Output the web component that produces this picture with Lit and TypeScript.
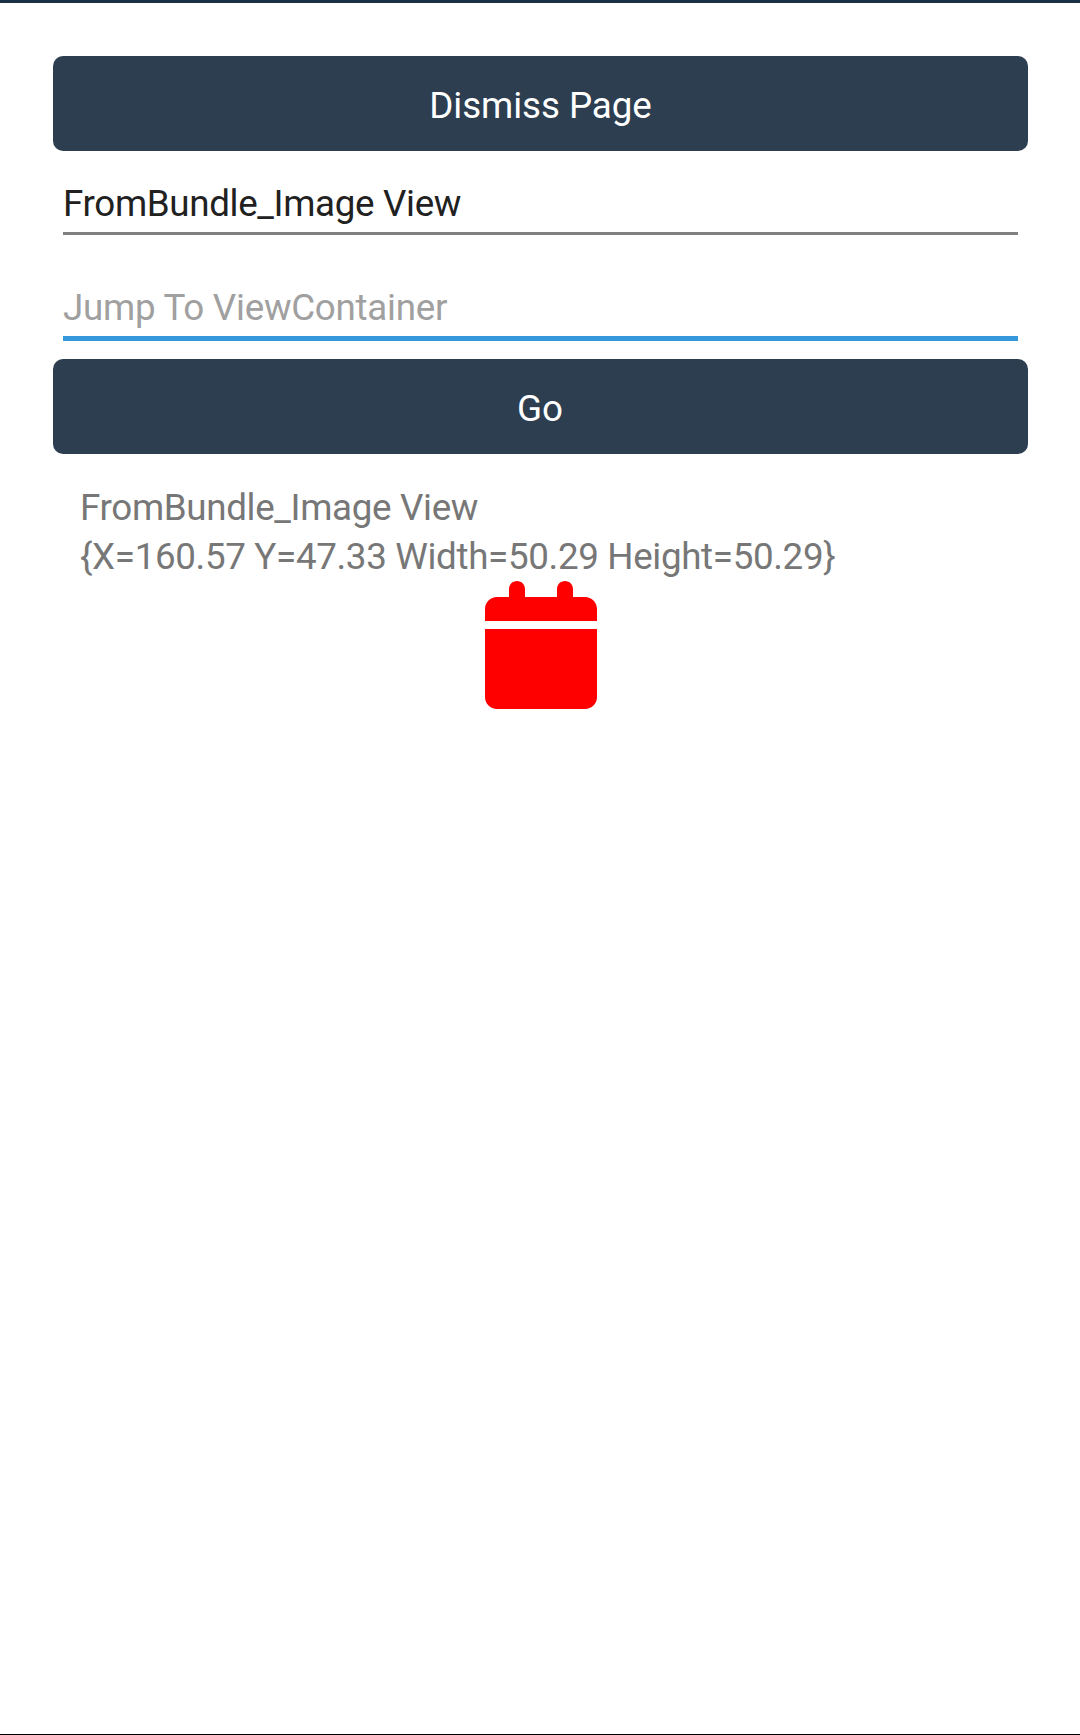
import { LitElement, html, css } from "lit";
import { customElement } from "lit/decorators.js";

@customElement("app-root")
export class AppRoot extends LitElement {
  static styles = css`
    :host {
      display: flex;
      flex-direction: column;
      box-sizing: border-box;
      width: 1080px;
      height: 1735px;
      border-top: 3px solid #1b3147;
      border-bottom: 1px solid #000;
      background: #fff;
      padding: 53px 52px 0 53px;
      font-family: Roboto, sans-serif;
      font-size: 36.75px;
      line-height: 43px;
      letter-spacing: -0.34px;
      color: #777;
    }
    .button {
      display: flex;
      align-items: center;
      justify-content: center;
      box-sizing: border-box;
      height: 95px;
      padding-top: 4px;
      flex: none;
      border-radius: 10px;
      background: #2c3e50;
      color: #fff;
      letter-spacing: -0.08px;
    }
    .button.go {
      padding-top: 3px;
      padding-right: 1px;
    }
    .field {
      box-sizing: border-box;
      margin: 0 10px;
      white-space: nowrap;
    }
    .value {
      height: 84px;
      padding-top: 31px;
      border-bottom: 3px solid #808080;
      color: #212121;
    }
    .hint {
      height: 106px;
      padding-top: 51px;
      margin-bottom: 18px;
      border-bottom: 5px solid #3498db;
      color: #a0a0a0;
      letter-spacing: -0.27px;
    }
    .label {
      height: 49px;
      flex: none;
      padding-left: 27px;
      white-space: nowrap;
    }
    .label.first {
      margin-top: 32px;
    }
    .label.bounds {
      height: 46px;
    }
    .calendar {
      align-self: center;
      width: 112px;
      height: 128px;
      flex: none;
    }
  `;

  render() {
    return html`
      <div class="button">Dismiss Page</div>
      <div class="field value">FromBundle_Image View</div>
      <div class="field hint">Jump To ViewContainer</div>
      <div class="button go">Go</div>
      <div class="label first">FromBundle_Image View</div>
      <div class="label bounds">{X=160.57 Y=47.33 Width=50.29 Height=50.29}</div>
      <svg class="calendar" viewBox="0 0 448 512" fill="#f00">
        <path d="M96 32C96 14.300 110.300 0 128 0s32 14.300 32 32v32h128V32c0-17.700 14.300-32 32-32s32 14.300 32 32v32h48c26.500 0 48 21.500 48 48v48H0v-48c0-26.500 21.500-48 48-48h48V32zM0 192h448v272c0 26.500-21.500 48-48 48H48c-26.500 0-48-21.500-48-48V192z"/>
      </svg>
    `;
  }
}
